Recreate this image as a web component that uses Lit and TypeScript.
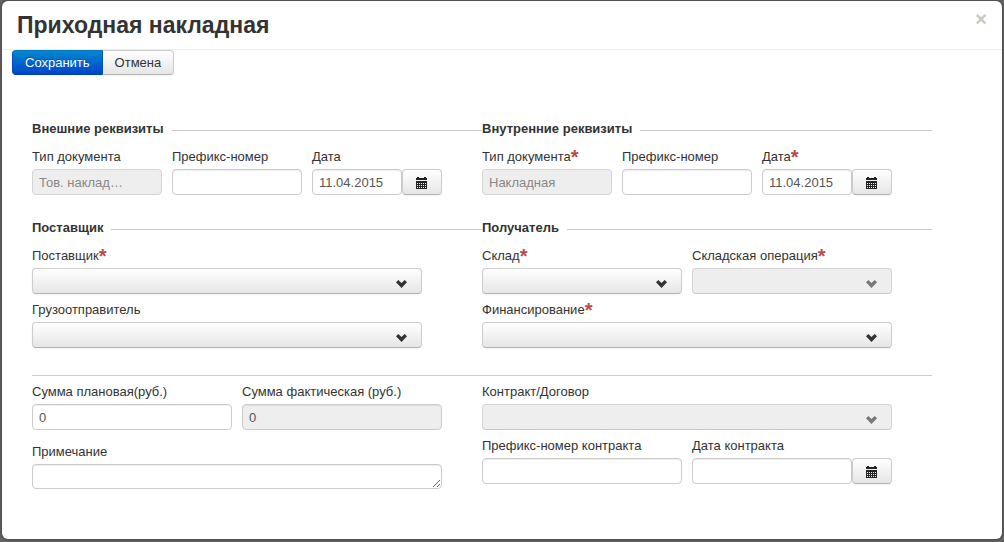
import { LitElement, html, css, svg, nothing } from "lit";
import { customElement } from "lit/decorators.js";

const calendarIcon = html`<svg class="cal-icon" viewBox="0 0 12 12" width="12" height="12" aria-hidden="true" shape-rendering="crispEdges">
  <path fill="#222" d="M1 0h2v1h5V0h2v1h1v2H0V1h1zM0 4h11v8H0z" />
  <path fill="#f4f4f4" d="M1 6h1v1H1zM3 6h1v1H3zM5 6h1v1H5zM7 6h1v1H7zM9 6h1v1H9zM1 8h1v1H1zM3 8h1v1H3zM5 8h1v1H5zM7 8h1v1H7zM9 8h1v1H9zM1 10h1v1H1zM3 10h1v1H3zM5 10h1v1H5zM7 10h1v1H7zM9 10h1v1H9z" />
</svg>`;

const chevronPath = svg`<path d="M0 2.2 2.3 0 5.5 2.9 8.7 0 11 2.2 5.5 8z" />`;

interface FieldOptions {
  required?: boolean;
  disabled?: boolean;
  readonly?: boolean;
  value?: string;
}

@customElement("app-root")
export class AppRoot extends LitElement {
  static styles = css`
    :host {
      display: flex;
      box-sizing: border-box;
      min-height: 100vh;
      padding: 1px 2px 3px;
      background: #666;
      color: #333;
      font: 13px/20px "Liberation Sans", Arial, sans-serif;
    }
    * { box-sizing: border-box; }
    .modal {
      flex: 1;
      min-width: 0;
      background: #fff;
      border-radius: 6px;
      box-shadow: 0 0 3px 1px #444;
    }
    .header {
      display: flex;
      justify-content: space-between;
      align-items: flex-start;
      padding: 9px 15px 8px;
      border-bottom: 1px solid #eee;
    }
    .title { margin: 0; font-size: 23px; line-height: 31px; font-weight: bold; }
    .close {
      width: 12px;
      height: 18px;
      padding: 0;
      border: 0;
      background: none;
      color: #c8c8c8;
      font: bold 20px/18px "Liberation Sans", Arial, sans-serif;
    }
    .toolbar { display: flex; padding: 0 10px; }
    .btn {
      height: 26px;
      padding: 0 12px;
      border: 1px solid #ccc;
      border-bottom-color: #b3b3b3;
      border-radius: 4px;
      background: linear-gradient(#fff, #e6e6e6);
      box-shadow: 0 1px 2px rgba(0, 0, 0, 0.05);
      color: #333;
      font: inherit;
    }
    .toolbar .btn { height: 25px; }
    .primary {
      border-color: #0077b8 #0050c0 #0040a8;
      border-radius: 4px 0 0 4px;
      background: linear-gradient(#0088cc, #0044cc);
      color: #fff;
      text-shadow: 0 -1px 0 rgba(0, 0, 0, 0.25);
    }
    .cancel { border-left: 0; border-radius: 0 4px 4px 0; }
    .form { padding: 44px 70px 48px 30px; }
    .columns { display: grid; grid-template-columns: 1fr 1fr; }
    .group { min-width: 0; margin: 0 0 23px; padding: 0; border: 0; }
    .legend {
      display: flex;
      align-items: center;
      gap: 8px;
      width: 100%;
      margin-bottom: 8px;
      padding: 0;
      font-weight: bold;
    }
    .legend::after { content: ""; flex: 1; border-top: 1px solid #ccc; margin-top: 2px; }
    .fields { display: grid; align-content: start; gap: 6px 10px; padding-right: 40px; }
    .three { grid-template-columns: repeat(3, 1fr); }
    .two { grid-template-columns: repeat(2, 1fr); }
    .supplier { padding-right: 60px; }
    .totals { row-gap: 12px; }
    .wide { grid-column: 1 / -1; }
    .field { display: flex; flex-direction: column; gap: 2px; min-width: 0; }
    .label { height: 20px; white-space: nowrap; }
    .star { color: #b94a48; font-size: 20px; font-weight: bold; line-height: 1px; vertical-align: -3px; }
    .input {
      width: 100%;
      min-width: 0;
      height: 26px;
      padding: 0 6px;
      border: 1px solid #ccc;
      border-radius: 4px;
      background: #fff;
      box-shadow: inset 0 1px 1px rgba(0, 0, 0, 0.075);
      color: #555;
      font: inherit;
    }
    .input:read-only { background: #eee; }
    .input:disabled { border-color: #d4d4d4; background: #eee; box-shadow: none; color: #888; }
    .area { display: block; height: 25px; min-height: 25px; padding: 2px 6px; overflow: hidden; resize: vertical; }
    .date { display: flex; }
    .date .btn { flex: none; width: 40px; padding: 2px 0 0; }
    .date-box { display: flex; flex: 1; min-width: 0; }
    .cal-icon { display: block; margin: 0 auto; }
    .pick { display: grid; align-items: center; }
    .pick > * { grid-area: 1 / 1; }
    .select { width: 100%; padding: 0 30px 0 6px; appearance: none; }
    .select:disabled { border-color: #d4d4d4 #d4d4d4 #c8c8c8; background: #eee; box-shadow: none; opacity: 1; }
    .chevron { justify-self: end; margin: 5px 15px 0 0; fill: #333; pointer-events: none; }
    .select:disabled + .chevron { fill: #777; }
    .rule { margin: 4px 0 6px; border: 0; border-top: 1px solid #ccc; }
  `;

  private label(id: string, text: string, required = false) {
    return html`<label class="label" for=${id}>${text}${required ? html`<span class="star">*</span>` : nothing}</label>`;
  }

  private text(id: string, text: string, o: FieldOptions = {}) {
    return html`<div class="field">
      ${this.label(id, text, o.required)}
      <input class="input" id=${id} type="text" .value=${o.value ?? ""} ?disabled=${o.disabled} ?readonly=${o.readonly} />
    </div>`;
  }

  private date(id: string, text: string, o: FieldOptions = {}) {
    return html`<div class="field">
      ${this.label(id, text, o.required)}
      <div class="date">
        <div class="date-box"><input class="input" id=${id} type="text" .value=${o.value ?? ""} /></div>
        <button class="btn" type="button" aria-label="Выбрать дату">${calendarIcon}</button>
      </div>
    </div>`;
  }

  private select(id: string, text: string, o: FieldOptions = {}, wide = false) {
    return html`<div class="field ${wide ? "wide" : ""}">
      ${this.label(id, text, o.required)}
      <div class="pick">
        <select class="btn select" id=${id} ?disabled=${o.disabled}><option></option></select>
        <svg class="chevron" viewBox="0 0 11 8" width="11" height="8" aria-hidden="true">${chevronPath}</svg>
      </div>
    </div>`;
  }

  render() {
    return html`
      <section class="modal" role="dialog" aria-labelledby="title">
        <header class="header">
          <h1 class="title" id="title">Приходная накладная</h1>
          <button class="close" type="button" aria-label="Закрыть">×</button>
        </header>
        <div class="toolbar">
          <button class="btn primary" type="submit" form="invoice">Сохранить</button>
          <button class="btn cancel" type="button">Отмена</button>
        </div>
        <form class="form" id="invoice">
          <div class="columns">
            <fieldset class="group">
              <legend class="legend">Внешние реквизиты</legend>
              <div class="fields three">
                ${this.text("ext-type", "Тип документа", { value: "Тов. наклад…", disabled: true })}
                ${this.text("ext-number", "Префикс-номер")}
                ${this.date("ext-date", "Дата", { value: "11.04.2015" })}
              </div>
            </fieldset>
            <fieldset class="group">
              <legend class="legend">Внутренние реквизиты</legend>
              <div class="fields three">
                ${this.text("int-type", "Тип документа", { value: "Накладная", disabled: true, required: true })}
                ${this.text("int-number", "Префикс-номер")}
                ${this.date("int-date", "Дата", { value: "11.04.2015", required: true })}
              </div>
            </fieldset>
            <fieldset class="group">
              <legend class="legend">Поставщик</legend>
              <div class="fields supplier">
                ${this.select("supplier", "Поставщик", { required: true })}
                ${this.select("shipper", "Грузоотправитель")}
              </div>
            </fieldset>
            <fieldset class="group">
              <legend class="legend">Получатель</legend>
              <div class="fields two">
                ${this.select("store", "Склад", { required: true })}
                ${this.select("operation", "Складская операция", { required: true, disabled: true })}
                ${this.select("funding", "Финансирование", { required: true }, true)}
              </div>
            </fieldset>
          </div>
          <hr class="rule" />
          <div class="columns">
            <div class="fields two totals">
              ${this.text("sum-plan", "Сумма плановая(руб.)", { value: "0" })}
              ${this.text("sum-fact", "Сумма фактическая (руб.)", { value: "0", readonly: true })}
              <div class="field wide">
                ${this.label("note", "Примечание")}
                <textarea class="input area" id="note" rows="1"></textarea>
              </div>
            </div>
            <div class="fields two">
              ${this.select("contract", "Контракт/Договор", { disabled: true }, true)}
              ${this.text("contract-number", "Префикс-номер контракта")}
              ${this.date("contract-date", "Дата контракта")}
            </div>
          </div>
        </form>
      </section>
    `;
  }
}
